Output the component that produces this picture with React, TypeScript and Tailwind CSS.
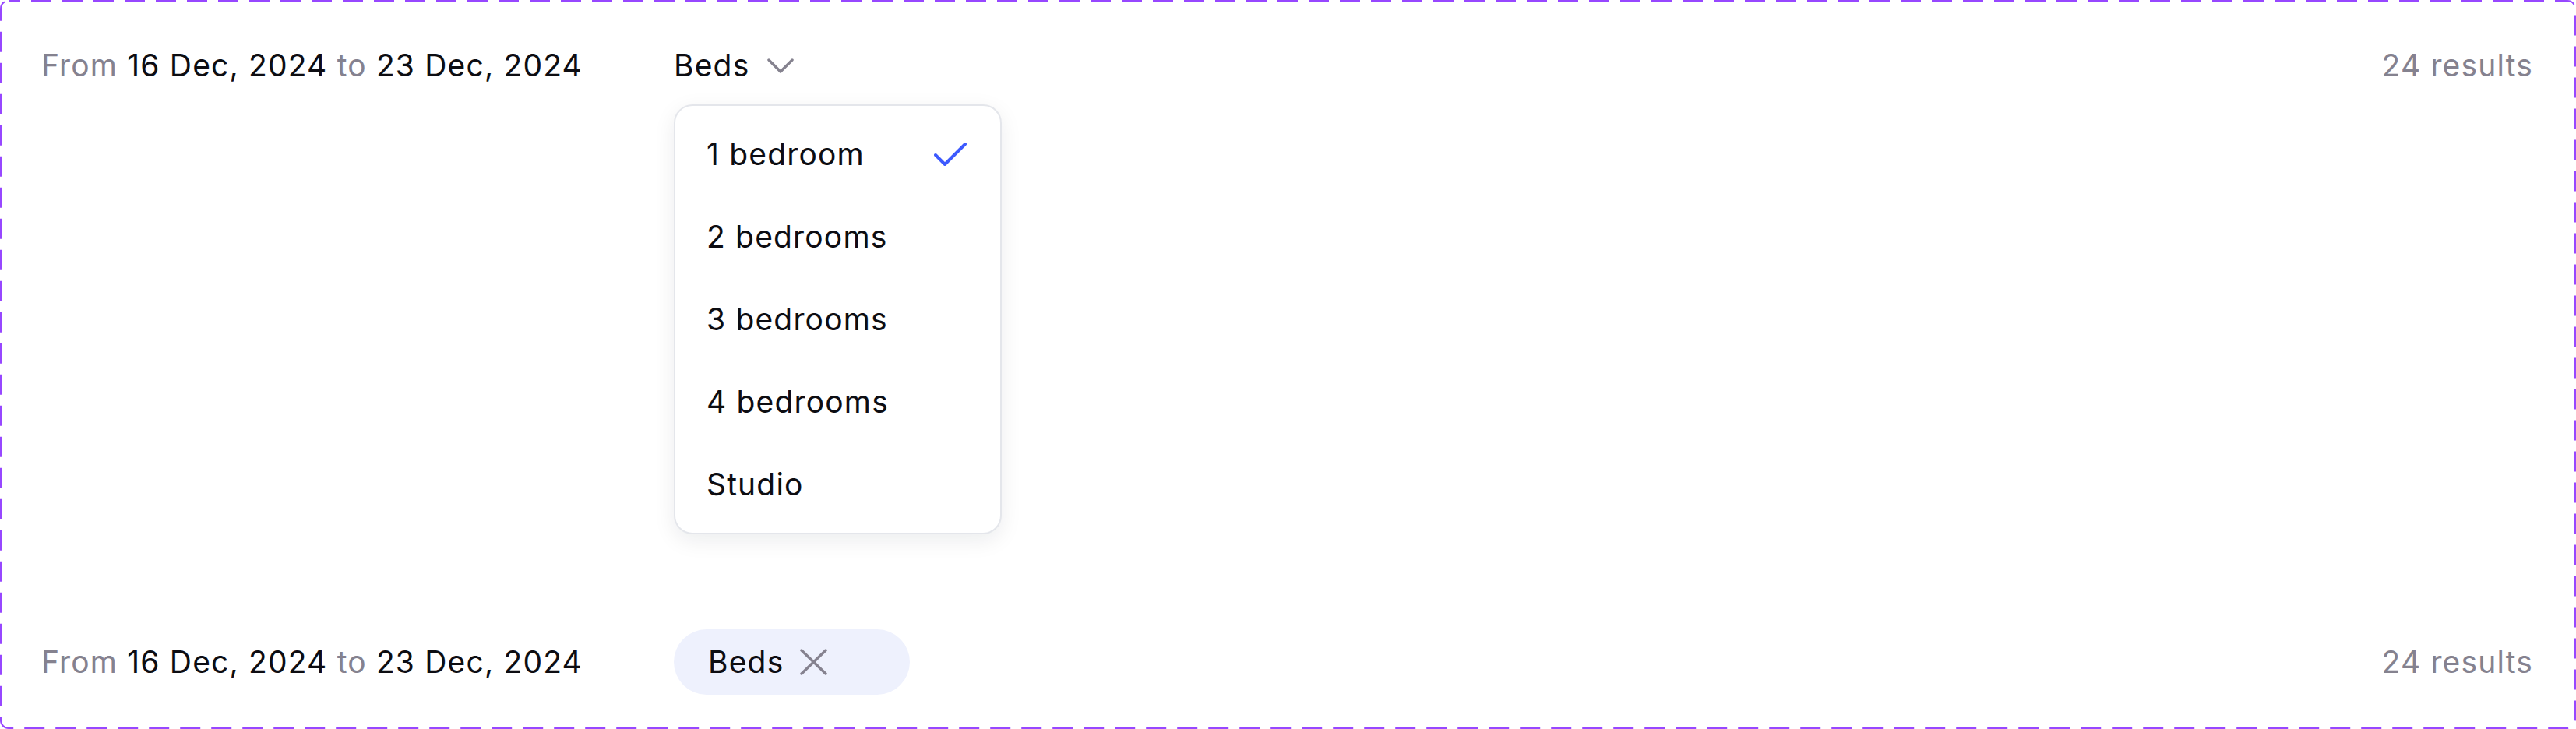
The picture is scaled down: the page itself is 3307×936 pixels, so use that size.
import React from 'react';

const options = ['1 bedroom', '2 bedrooms', '3 bedrooms', '4 bedrooms', 'Studio'];

const DateRange: React.FC = () => (
  <div className="w-[812px] h-[84px] flex items-center whitespace-nowrap">
    <span className="text-[#85828f]">From&nbsp;</span>
    <span>16 Dec, 2024&nbsp;</span>
    <span className="text-[#85828f]">to&nbsp;</span>
    <span>23 Dec, 2024</span>
  </div>
);

const Results: React.FC = () => (
  <div className="ml-auto h-[84px] flex items-center text-[#85828f] whitespace-nowrap">24 results</div>
);

const ChevronDown: React.FC = () => (
  <svg width="34" height="19" viewBox="0 0 34 19" fill="none">
    <path d="M2 2 L17 17 L32 2" stroke="#85828f" strokeWidth="3.5" strokeLinecap="round" strokeLinejoin="round" />
  </svg>
);

const CheckMark: React.FC = () => (
  <svg width="42" height="30" viewBox="0 0 42 30" fill="none">
    <path d="M2 16 L14 28 L40 2" stroke="#3d5afe" strokeWidth="4" strokeLinecap="round" strokeLinejoin="round" />
  </svg>
);

const XMark: React.FC = () => (
  <svg width="35" height="34" viewBox="0 0 35 34" fill="none">
    <path d="M2 2 L33 32 M33 2 L2 32" stroke="#85828f" strokeWidth="3.5" strokeLinecap="round" />
  </svg>
);

export default function App() {
  const [selected] = React.useState('1 bedroom');

  return (
    <div className="relative w-full h-[936px] bg-white text-[#0d0d12] text-[39px] font-['Inter',sans-serif] tracking-[0.03em]">
      {/* dashed frame */}
      <svg className="absolute inset-0 pointer-events-none" width="3307" height="936">
        <rect x="1" y="1" width="3305" height="934" rx="10" fill="none" stroke="#9747ff" strokeWidth="2" strokeDasharray="26 14" strokeDashoffset="11" />
      </svg>

      <div className="h-full flex flex-col justify-between pl-[53px] pr-[55px] pt-[42px] pb-[44px]">
        {/* open state */}
        <div className="flex items-start">
          <DateRange />
          <div className="flex flex-col">
            <button className="h-[84px] flex items-center gap-[23px] self-start">
              <span>Beds</span>
              <ChevronDown />
            </button>
            <div className="mt-[8px] w-[421px] rounded-[24px] border-2 border-[#e4e6eb] bg-white py-[9px] shadow-[0_8px_28px_rgba(16,24,40,0.08)]">
              {options.map(o => (
                <div key={o} className="h-[106px] flex items-center justify-between pl-[40px] pr-[43px]">
                  <span>{o}</span>
                  {o === selected && <CheckMark />}
                </div>
              ))}
            </div>
          </div>
          <Results />
        </div>

        {/* applied state */}
        <div className="flex items-center">
          <DateRange />
          <div className="w-[303px] h-[84px] rounded-full bg-[#eef1fd] flex items-center pl-[44px] gap-[21px]">
            <span>Beds</span>
            <XMark />
          </div>
          <Results />
        </div>
      </div>
    </div>
  );
}
